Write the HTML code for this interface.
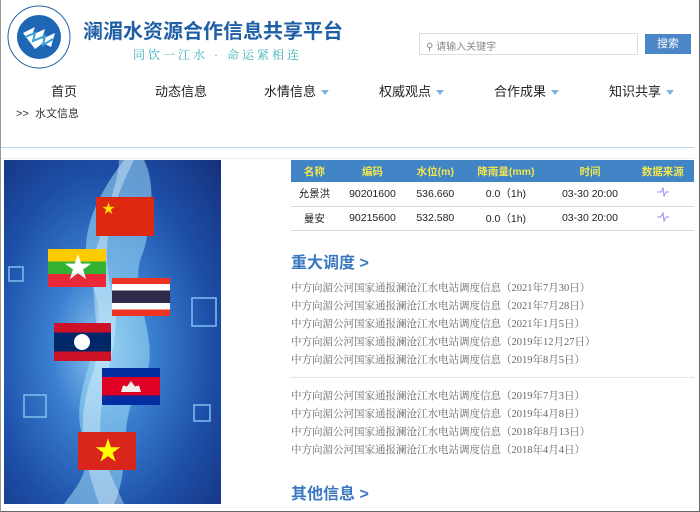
<!DOCTYPE html>
<html><head><meta charset="utf-8"><style>
*{margin:0;padding:0;box-sizing:border-box}
body{width:700px;height:512px;overflow:hidden;background:#fff;font-family:"Liberation Sans","Noto Sans CJK SC",sans-serif;position:relative;border:1px solid #666;border-top:none;border-left:1px solid #999}
.a{position:absolute;white-space:nowrap}
.nav{top:81px;font-size:13px;color:#222}
.tri{display:inline-block;width:0;height:0;border-left:4px solid transparent;border-right:4px solid transparent;border-top:5px solid #7fb0e0;margin-left:5px;vertical-align:middle}
table{position:absolute;left:290px;top:160px;width:403px;border-collapse:collapse;font-size:10.5px;text-align:center}
th{background:#4185c7;color:#f2e64d;height:22px;font-weight:bold}
td{height:24px;border-bottom:1px solid #d8d8d8;color:#222}
.li{position:absolute;left:290px;font-family:"Liberation Serif","Noto Serif CJK SC",serif;font-size:10.5px;color:#666;white-space:nowrap}
.h{position:absolute;left:290px;font-size:16px;font-weight:bold;color:#3a78c0}
</style></head><body>
<svg class="a" style="left:4px;top:3px" width="70" height="68" viewBox="0 0 70 68">
<circle cx="34" cy="34" r="31" fill="none" stroke="#1e5ea8" stroke-width="1"/>
<circle cx="34" cy="34" r="22" fill="#1f67b5"/>
<path d="M18 30 L30 24 L27 32 L40 26 L37 36 L50 30 L46 44 L38 40 L30 46 Z" fill="#fff"/>
<path d="M20 34 L30 30 L28 38 L40 33 L38 42 L48 36" stroke="#3aa0d8" stroke-width="2" fill="none"/>
</svg>
<div class="a" style="left:82px;top:15px;font-size:20px;font-weight:bold;color:#1f5fa6">澜湄水资源合作信息共享平台</div>
<div class="a" style="left:132px;top:46px;font-size:12px;color:#3ab0b6;letter-spacing:3px;font-family:'Liberation Serif','Noto Serif CJK SC',serif">同饮一江水 · 命运紧相连</div>
<div class="a" style="left:418px;top:33px;width:219px;height:22px;border:1px solid #ddd;font-size:10px;color:#888;padding:4px 0 0 6px">&#9906; 请输入关键字</div>
<div class="a" style="left:644px;top:34px;width:46px;height:20px;background:#4a86c8;color:#fff;font-size:11px;text-align:center;line-height:20px">搜索</div>
<div class="a nav" style="left:50px">首页</div>
<div class="a nav" style="left:154px">动态信息</div>
<div class="a nav" style="left:263px">水情信息<span class="tri"></span></div>
<div class="a nav" style="left:378px">权威观点<span class="tri"></span></div>
<div class="a nav" style="left:493px">合作成果<span class="tri"></span></div>
<div class="a nav" style="left:608px">知识共享<span class="tri"></span></div>
<div class="a" style="left:15px;top:105px;font-size:11px;color:#333">&gt;&gt;&nbsp; 水文信息</div>
<div class="a" style="left:0;top:147px;width:693px;height:1px;background:#bcd4ee"></div>
<div class="a" style="left:0;top:158px;width:693px;height:1px;background:#e6eef7"></div>
<div class="a" style="left:3px;top:160px;width:217px;height:344px;background:radial-gradient(ellipse at 45% 55%,#8fc8f0 0%,#3a7fd0 30%,#1d4fa8 65%,#15307a 100%);overflow:hidden">
<svg width="217" height="344" style="position:absolute;left:0;top:0">
<path d="M120 0 C90 40 70 80 90 130 C110 180 60 230 80 280 C90 310 70 330 60 344 L110 344 C130 300 110 260 140 220 C160 180 120 130 140 90 C150 50 150 20 140 0Z" fill="#9fdcf5" opacity="0.55"/>
<path d="M130 0 C105 50 95 90 110 140 C120 190 85 240 100 300 L120 344 L95 344 C80 300 70 260 90 210 C100 170 80 120 95 80 C105 40 115 20 115 0Z" fill="#e8f8ff" opacity="0.4"/>
<rect x="5" y="107" width="14" height="14" fill="none" stroke="#7fc0f0" stroke-width="1.5"/>
<rect x="188" y="138" width="24" height="28" fill="none" stroke="#7fc0f0" stroke-width="1.5"/>
<rect x="20" y="235" width="22" height="22" fill="none" stroke="#7fc0f0" stroke-width="1.5"/>
<rect x="190" y="245" width="16" height="16" fill="none" stroke="#7fc0f0" stroke-width="1.5"/>
</svg>
</div>
<div class="a" style="left:95px;top:197px;width:58px;height:39px;background:#de2910"><span style="position:absolute;left:6px;top:1px;color:#ffde00;font-size:13px">★</span></div>
<div class="a" style="left:47px;top:249px;width:58px;height:38px;background:linear-gradient(#fecb00 33%,#34b233 33% 66%,#ea2839 66%)"><span style="position:absolute;left:16px;top:0;color:#fff;font-size:28px;line-height:38px">★</span></div>
<div class="a" style="left:111px;top:278px;width:58px;height:38px;background:linear-gradient(#e32 16%,#fff 16% 33%,#2d2a4a 33% 66%,#fff 66% 83%,#e32 83%)"></div>
<div class="a" style="left:53px;top:323px;width:57px;height:38px;background:linear-gradient(#ce1126 25%,#002868 25% 75%,#ce1126 75%)"><span style="position:absolute;left:20px;top:11px;width:16px;height:16px;border-radius:50%;background:#fff"></span></div>
<div class="a" style="left:101px;top:368px;width:58px;height:37px;background:linear-gradient(#032ea1 25%,#e00025 25% 75%,#032ea1 75%)"><span style="position:absolute;left:19px;top:13px;width:20px;height:11px;background:#eee;clip-path:polygon(0 100%,10% 40%,30% 50%,50% 0,70% 50%,90% 40%,100% 100%)"></span></div>
<div class="a" style="left:77px;top:432px;width:58px;height:38px;background:#da251d"><span style="position:absolute;left:17px;top:0;color:#ff0;font-size:26px;line-height:38px">★</span></div>
<table>
<tr><th>名称</th><th>编码</th><th>水位(m)</th><th>降雨量(mm)</th><th>时间</th><th>数据来源</th></tr>
<tr><td>允景洪</td><td>90201600</td><td>536.660</td><td>0.0（1h)</td><td>03-30 20:00</td><td><svg width="12" height="10"><path d="M0 5H4L6 1L7 9L9 5H12" stroke="#9a8cf0" fill="none"/></svg></td></tr>
<tr><td>曼安</td><td>90215600</td><td>532.580</td><td>0.0（1h)</td><td>03-30 20:00</td><td><svg width="12" height="10"><path d="M0 5H4L6 1L7 9L9 5H12" stroke="#9a8cf0" fill="none"/></svg></td></tr>
</table>
<div class="h" style="top:249px">重大调度 &gt;</div>
<div class="li" style="top:280px">中方向湄公河国家通报澜沧江水电站调度信息（2021年7月30日）</div>
<div class="li" style="top:298px">中方向湄公河国家通报澜沧江水电站调度信息（2021年7月28日）</div>
<div class="li" style="top:316px">中方向湄公河国家通报澜沧江水电站调度信息（2021年1月5日）</div>
<div class="li" style="top:334px">中方向湄公河国家通报澜沧江水电站调度信息（2019年12月27日）</div>
<div class="li" style="top:352px">中方向湄公河国家通报澜沧江水电站调度信息（2019年8月5日）</div>
<div class="a" style="left:290px;top:377px;width:403px;border-top:1px dotted #ccc"></div>
<div class="li" style="top:388px">中方向湄公河国家通报澜沧江水电站调度信息（2019年7月3日）</div>
<div class="li" style="top:406px">中方向湄公河国家通报澜沧江水电站调度信息（2019年4月8日）</div>
<div class="li" style="top:424px">中方向湄公河国家通报澜沧江水电站调度信息（2018年8月13日）</div>
<div class="li" style="top:442px">中方向湄公河国家通报澜沧江水电站调度信息（2018年4月4日）</div>
<div class="h" style="top:480px">其他信息 &gt;</div>
</body></html>
